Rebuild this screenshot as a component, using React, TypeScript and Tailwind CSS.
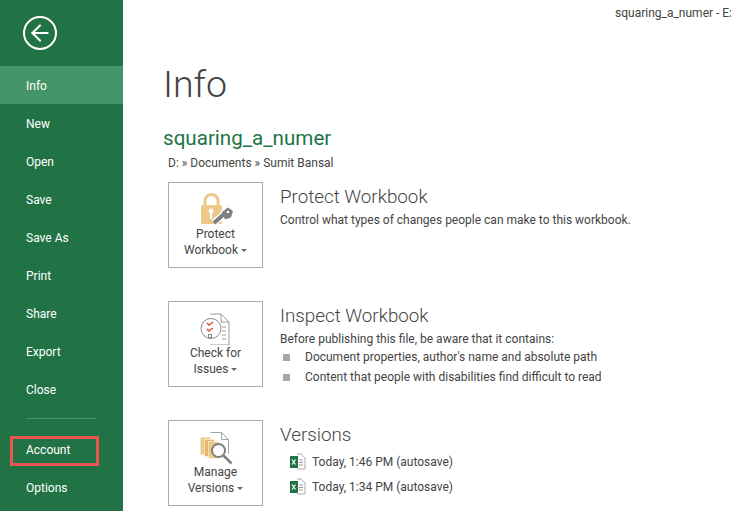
import { ArrowLeft } from 'lucide-react';

const font = { fontFamily: 'Roboto, "Noto Sans", sans-serif' };

const menuTop = ['New', 'Open', 'Save', 'Save As', 'Print', 'Share', 'Export', 'Close'];

function Caret() {
  return <span className="inline-block ml-[3px] mb-[2px] border-x-[3px] border-t-[3px] border-x-transparent border-t-[#666]" />;
}

function LockIcon() {
  return (
    <svg width="36" height="36" viewBox="0 0 36 36">
      <path d="M7 16v-5a6.500 6.500 0 0 1 13 0v5" fill="none" stroke="#edc987" strokeWidth="3" />
      <rect x="3" y="15" width="21" height="19" rx="1.500" fill="#edc987" />
      <circle cx="13" cy="21" r="2.500" fill="#fff" />
      <rect x="12" y="22" width="2" height="7" fill="#fff" />
      <path d="M16 33l10-9" stroke="#fff" strokeWidth="7" fill="none" />
      <path d="M24 21l6-4.500 5 3.500-2 7-6 2z" fill="#fff" stroke="#fff" strokeWidth="2" />
      <path d="M16 33l10-9" stroke="#7f7f7f" strokeWidth="4" fill="none" />
      <path d="M24 22l6-4.500 5 3.500-2 6.500-6 2z" fill="#7f7f7f" />
      <circle cx="30" cy="22" r="1.300" fill="#fff" />
    </svg>
  );
}

function CheckIcon() {
  return (
    <svg width="32" height="36" viewBox="0 0 32 36" fill="none">
      <path d="M10 5h11l8 8v23H10" stroke="#9a9a9a" />
      <path d="M21 5v8h8" stroke="#9a9a9a" />
      <path d="M22 18h4M22 22h4M22 26h4M22 30h4" stroke="#9a9a9a" />
      <circle cx="11" cy="19.500" r="10" fill="#fff" stroke="#8a8a8a" />
      <path d="M7 14l2 2 4-3M7 20l2 2 4-3" stroke="#d9542b" strokeWidth="1.500" />
      <rect x="8.500" y="25.500" width="3" height="3" stroke="#8a8a8a" />
    </svg>
  );
}

function VersionsIcon() {
  return (
    <svg width="34" height="36" viewBox="0 0 34 36" fill="none">
      <path d="M11.500 4.500h11l7 7v14" stroke="#a5a5a5" fill="#fff" />
      <path d="M22.500 4.500v7h7" stroke="#a5a5a5" />
      <rect x="1.500" y="9.500" width="10" height="17" fill="#edc987" />
      <rect x="5.500" y="11.500" width="10" height="17" fill="#e5b76e" stroke="#fff" strokeWidth="0.500" />
      <rect x="9.500" y="13.500" width="10" height="17" fill="#edc987" stroke="#fff" strokeWidth="0.500" />
      <circle cx="19.500" cy="22.500" r="6.500" fill="#fff" stroke="#7f7f7f" strokeWidth="2" />
      <path d="M24.500 27.500l8 8" stroke="#7f7f7f" strokeWidth="2.500" />
    </svg>
  );
}

function XlsxIcon() {
  return (
    <svg width="17" height="17" viewBox="0 0 17 17" fill="none">
      <path d="M8 1h4l4 4v11H8" fill="#fff" stroke="#a9a9a9" />
      <path d="M10 7h4M10 9.500h4M10 12h4" stroke="#9a9a9a" />
      <rect x="1" y="3" width="8" height="12" fill="#217346" />
      <path d="M3 6.500l3.500 5M6.500 6.500l-3.500 5" stroke="#fff" strokeWidth="1.200" />
    </svg>
  );
}

function Tile({ icon, lines }: { icon: React.ReactNode; lines: [string, string] }) {
  return (
    <div className="w-[95px] h-[86px] shrink-0 border border-[#ababab] flex flex-col items-center pt-[6px] text-[12px] leading-[16px] text-[#444]">
      <div className="h-[37px] flex items-center justify-center">{icon}</div>
      <div>{lines[0]}</div>
      <div>
        {lines[1]}
        <Caret />
      </div>
    </div>
  );
}

export default function App() {
  return (
    <div className="w-[731px] h-[511px] overflow-hidden bg-white flex relative" style={font}>
      <aside className="w-[123px] h-full shrink-0 bg-[#217346] text-white text-[12px] flex flex-col">
        <div className="h-[66px] pl-[23px] pt-[16px]">
          <div className="w-[34px] h-[34px] rounded-full border-2 border-white flex items-center justify-center">
            <ArrowLeft size={26} strokeWidth={1.9} />
          </div>
        </div>
        <div className="h-[38px] bg-[#439467] pl-[26px] pt-px flex items-center">Info</div>
        {menuTop.map((item) => (
          <div key={item} className="h-[38px] pl-[26px] pt-px flex items-center">
            {item}
          </div>
        ))}
        <div className="mx-[26px] mt-[10px] h-px w-[71px] bg-[#439467]" />
        <div className="mt-[17px] ml-[10px] w-[89px] h-[30px] border-[3px] border-[#ef5350] pl-[13px] pb-[2px] flex items-center">
          Account
        </div>
        <div className="h-[38px] mt-[2px] pl-[26px] pt-px flex items-center">Options</div>
      </aside>

      <main className="flex-1 min-w-0 relative text-[#444]">
        <div className="h-[26px] pl-[492px] text-[12px] leading-[26px] whitespace-nowrap text-[#444]">squaring_a_numer - Ex</div>
        <h1 className="ml-[40px] mt-[33px] text-[37.500px] leading-[50px] font-light text-[#444]">Info</h1>
        <div className="ml-[40px] mt-[15px] text-[20.600px] leading-[28px] text-[#217346]">squaring_a_numer</div>
        <div className="ml-[45px] mt-[2px] text-[12px] leading-[18px]">D: » Documents » Sumit Bansal</div>

        <div className="ml-[45px] mt-[10px] flex gap-[17px] h-[119px]">
          <Tile icon={<LockIcon />} lines={['Protect', 'Workbook']} />
          <div>
            <div className="text-[18.800px] leading-[26px] mt-[2px] font-light">Protect Workbook</div>
            <div className="text-[12px] leading-[18px] mt-[1px]">Control what types of changes people can make to this workbook.</div>
          </div>
        </div>

        <div className="ml-[45px] flex gap-[17px] h-[119px]">
          <Tile icon={<CheckIcon />} lines={['Check for', 'Issues']} />
          <div>
            <div className="text-[18.800px] leading-[26px] mt-[2px] font-light">Inspect Workbook</div>
            <div className="text-[12px] leading-[18px] mt-px">Before publishing this file, be aware that it contains:</div>
            <div className="text-[12px] leading-[20px] -mt-px">
              <div className="flex items-center">
                <span className="w-[7px] h-[7px] bg-[#a6a6a6] ml-[3px] mr-[15px]" />
                Document properties, author's name and absolute path
              </div>
              <div className="flex items-center">
                <span className="w-[7px] h-[7px] bg-[#a6a6a6] ml-[3px] mr-[15px]" />
                Content that people with disabilities find difficult to read
              </div>
            </div>
          </div>
        </div>

        <div className="ml-[45px] flex gap-[17px]">
          <Tile icon={<VersionsIcon />} lines={['Manage', 'Versions']} />
          <div>
            <div className="text-[18.800px] leading-[26px] mt-[2px] font-light">Versions</div>
            <div className="text-[12px] mt-[5px] flex flex-col gap-[8px]">
              <div className="flex items-center gap-[6px] ml-[9px] h-[17px]">
                <XlsxIcon />
                Today, 1:46 PM (autosave)
              </div>
              <div className="flex items-center gap-[6px] ml-[9px] h-[17px]">
                <XlsxIcon />
                Today, 1:34 PM (autosave)
              </div>
            </div>
          </div>
        </div>
      </main>
    </div>
  );
}
